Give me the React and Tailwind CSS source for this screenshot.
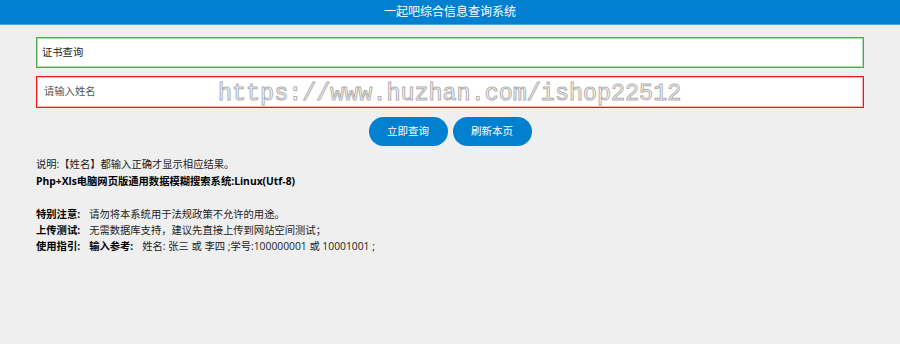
import React from 'react'

export default function App() {
  return (
    <div className="relative min-h-[344px] bg-[#efefef] font-['Open_Sans','Noto_Sans_CJK_SC',sans-serif] text-[10.3px] text-[#222]">
      <div className="h-[25px] bg-[#0180cf] border-b border-[#4aa3dc] text-center text-white text-[12px] leading-[24px]">
        一起吧综合信息查询系统
      </div>

      <div className="px-[36px] pt-[12px]">
        <div className="h-[31px] bg-white border border-[#4caa4c] shadow-[inset_0_0_0_1px_#b4dcb4] flex items-center px-[5px] text-[#222]">
          证书查询
        </div>
        <div className="mt-[8px] h-[32px] bg-white border border-[#f01818] shadow-[inset_0_0_0_1px_#ffb0b0] flex items-center px-[7px] text-[#555]">
          请输入姓名
        </div>

        <div className="mt-[9px] flex justify-center gap-[5px]">
          <button className="w-[79px] h-[29px] rounded-full bg-[#0180cf] text-white text-[10.5px]">立即查询</button>
          <button className="w-[79px] h-[29px] rounded-full bg-[#0180cf] text-white text-[10.5px]">刷新本页</button>
        </div>

        <div className="mt-[10px] leading-[17px]">
          <p>说明:【姓名】都输入正确才显示相应结果。</p>
          <p className="font-bold text-black">Php+Xls电脑网页版通用数据模糊搜索系统:Linux(Utf-8)</p>
        </div>

        <div className="mt-[16px] leading-[16px]">
          <p><b className="text-black">特别注意:</b><span className="ml-[9px]">请勿将本系统用于法规政策不允许的用途。</span></p>
          <p><b className="text-black">上传测试:</b><span className="ml-[9px]">无需数据库支持，建议先直接上传到网站空间测试；</span></p>
          <p>
            <b className="text-black">使用指引:</b>
            <b className="ml-[9px] text-black">输入参考:</b>
            <span className="ml-[9px]">姓名: 张三 或 李四 ;学号:100000001 或 10001001 ;</span>
          </p>
        </div>
      </div>

      <div className="absolute left-[218px] top-[80px] font-['Liberation_Mono',monospace] text-[23.4px] leading-[28px] text-transparent [-webkit-text-stroke:1px_#b0b0b0] whitespace-nowrap">
        https://www.huzhan.com/ishop22512
      </div>
    </div>
  )
}
